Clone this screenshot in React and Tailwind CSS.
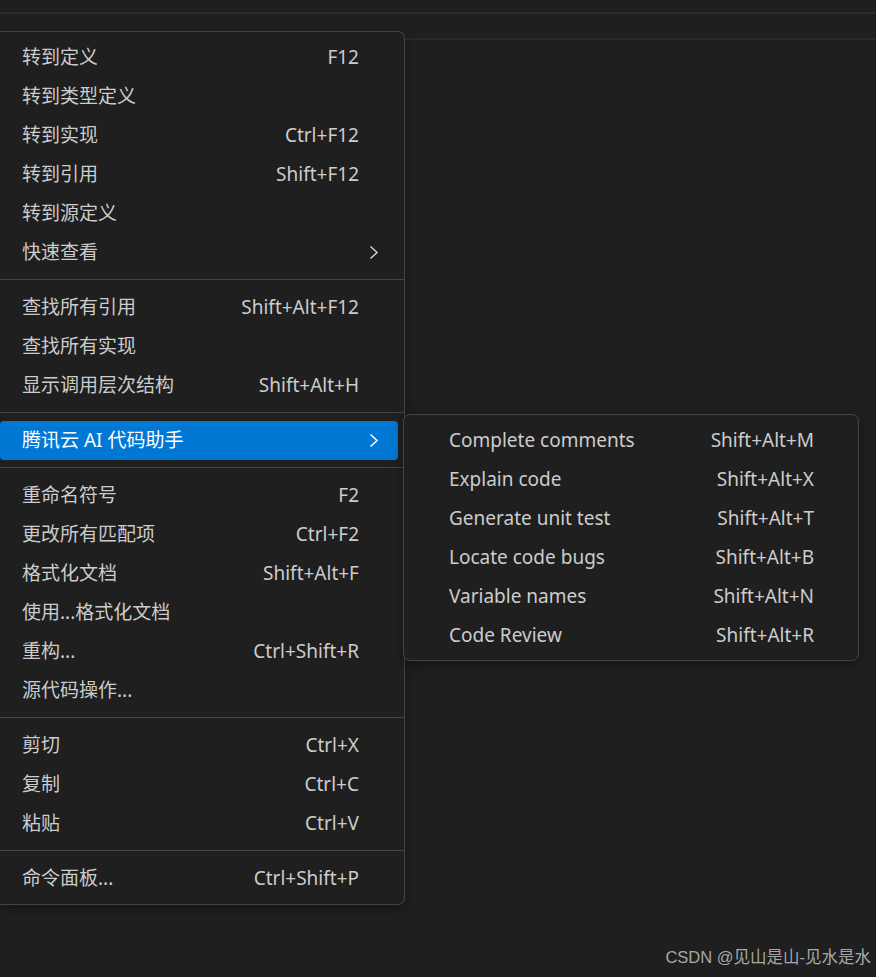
const font = { fontFamily: '"Noto Sans", "Noto Sans CJK SC", sans-serif' };

const mainMenu = [
  [
    { label: "转到定义", key: "F12" },
    { label: "转到类型定义" },
    { label: "转到实现", key: "Ctrl+F12" },
    { label: "转到引用", key: "Shift+F12" },
    { label: "转到源定义" },
    { label: "快速查看", sub: true },
  ],
  [
    { label: "查找所有引用", key: "Shift+Alt+F12" },
    { label: "查找所有实现" },
    { label: "显示调用层次结构", key: "Shift+Alt+H" },
  ],
  [{ label: "腾讯云 AI 代码助手", sub: true, active: true }],
  [
    { label: "重命名符号", key: "F2" },
    { label: "更改所有匹配项", key: "Ctrl+F2" },
    { label: "格式化文档", key: "Shift+Alt+F" },
    { label: "使用...格式化文档" },
    { label: "重构...", key: "Ctrl+Shift+R" },
    { label: "源代码操作..." },
  ],
  [
    { label: "剪切", key: "Ctrl+X" },
    { label: "复制", key: "Ctrl+C" },
    { label: "粘贴", key: "Ctrl+V" },
  ],
  [{ label: "命令面板...", key: "Ctrl+Shift+P" }],
];

const subMenu = [
  { label: "Complete comments", key: "Shift+Alt+M" },
  { label: "Explain code", key: "Shift+Alt+X" },
  { label: "Generate unit test", key: "Shift+Alt+T" },
  { label: "Locate code bugs", key: "Shift+Alt+B" },
  { label: "Variable names", key: "Shift+Alt+N" },
  { label: "Code Review", key: "Shift+Alt+R" },
];

function Chevron() {
  return (
    <svg width="10" height="15" viewBox="0 0 10 15" fill="none">
      <path d="M1.5 1.5 L8 7.5 L1.5 13.5" stroke="currentColor" strokeWidth="1.5" />
    </svg>
  );
}

function MenuRow({ item }) {
  return (
    <div
      className={`h-[39px] mr-[6px] flex items-center pl-[22px] rounded-[4px] ${
        item.active ? "bg-[#0078d4] text-white" : "text-[#cccccc]"
      }`}
    >
      <span className="flex-1 whitespace-nowrap">{item.label}</span>
      {item.key && <span className="whitespace-nowrap">{item.key}</span>}
      <div className="w-[39px] h-full flex items-center pl-[10px]">
        {item.sub && <Chevron />}
      </div>
    </div>
  );
}

export default function App() {
  return (
    <div className="relative w-[876px] h-[977px] bg-[#1f1f1f] overflow-hidden" style={font}>
      <div className="pt-[12px]">
        <div className="h-[2px] bg-[#2a2a2a]" />
        <div className="mt-[24px] ml-[404px] h-[2px] bg-[#2a2a2a]" />
      </div>

      <div className="absolute left-0 top-[31px] w-[405px] bg-[#1f1f1f] border border-l-0 border-[#454545] rounded-r-[7px] pt-[6px] pb-[6px] text-[19px] shadow-[0_4px_12px_rgba(0,0,0,0.35)]">
        {mainMenu.map((group, gi) => (
          <div key={gi}>
            {gi > 0 && (
              <div className="pt-[7px] pb-[8px]">
                <div className="h-[1px] bg-[#454545]" />
              </div>
            )}
            {group.map((item, i) => (
              <MenuRow key={i} item={item} />
            ))}
          </div>
        ))}
      </div>

      <div className="absolute left-[403px] top-[414px] w-[456px] bg-[#1f1f1f] border border-[#454545] rounded-[7px] pt-[6px] pb-[5px] text-[19px] text-[#cccccc] shadow-[0_4px_12px_rgba(0,0,0,0.35)]">
        {subMenu.map((item, i) => (
          <div key={i} className="h-[39px] flex items-center pl-[45px] pr-[44px]">
            <span className="flex-1 whitespace-nowrap">{item.label}</span>
            <span className="whitespace-nowrap">{item.key}</span>
          </div>
        ))}
      </div>

      <div
        className="absolute right-[5px] bottom-[7px] text-[16.5px] text-[#a8a8a8]"
        style={{ fontFamily: '"Liberation Sans", "Noto Sans CJK SC", sans-serif' }}
      >
        CSDN @见山是山-见水是水
      </div>
    </div>
  );
}
